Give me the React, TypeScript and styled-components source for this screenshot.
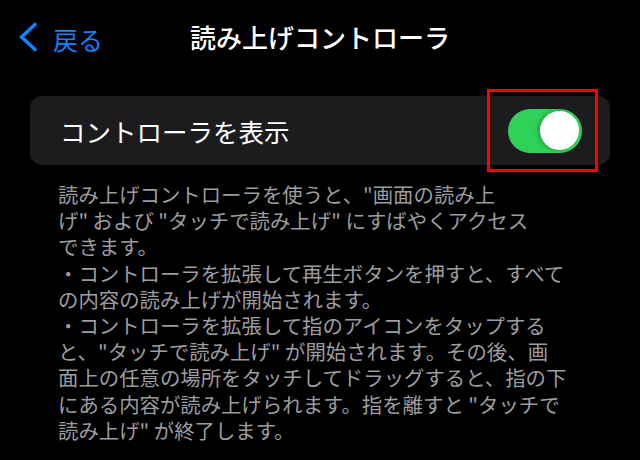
import styled, { createGlobalStyle } from 'styled-components';

const GlobalStyle = createGlobalStyle`
  html, body {
    margin: 0;
    padding: 0;
    background: #000000;
  }
  body {
    font-family: "Noto Sans CJK JP", "Noto Sans", sans-serif;
    -webkit-font-smoothing: antialiased;
  }
`;

const Screen = styled.div`
  width: 640px;
  height: 460px;
  overflow: hidden;
  background: #000000;
`;

const NavBar = styled.header`
  display: grid;
  grid-template-columns: 1fr auto 1fr;
  align-items: center;
  height: 74px;
`;

const BackButton = styled.button`
  display: flex;
  align-items: center;
  gap: 15px;
  justify-self: start;
  padding: 0 0 0 18px;
  background: none;
  border: none;
  color: #0a84ff;
  font-family: inherit;
  font-size: 25px;
  line-height: 1;
`;

const BackLabel = styled.span`
  margin-top: 4px;
`;

const Title = styled.h1`
  margin: 0;
  color: #ffffff;
  font-size: 26px;
  font-weight: 500;
  line-height: 1;
`;

const Card = styled.section`
  display: flex;
  align-items: center;
  justify-content: space-between;
  height: 69px;
  margin: 22px 30px 0;
  padding: 0 28px 0 30px;
  border-radius: 12px;
  background: #1c1c1e;
`;

const RowLabel = styled.span`
  color: #ffffff;
  font-size: 25.5px;
  line-height: 1;
`;

const ToggleWrap = styled.div`
  position: relative;
  display: flex;
`;

const Toggle = styled.div<{ $on: boolean }>`
  display: flex;
  justify-content: ${p => (p.$on ? 'flex-end' : 'flex-start')};
  align-items: center;
  box-sizing: border-box;
  width: 74px;
  height: 44px;
  padding: 0 3px;
  border-radius: 22px;
  background: ${p => (p.$on ? '#30d158' : '#39393d')};
`;

const Knob = styled.div`
  width: 39px;
  height: 39px;
  border-radius: 50%;
  background: #ffffff;
  box-shadow: -2px 0 4px rgba(0, 0, 0, 0.25);
`;

const Highlight = styled.div`
  position: absolute;
  top: -20px;
  bottom: -19px;
  left: -21px;
  right: -16px;
  border: 3px solid #ff0000;
  pointer-events: none;
`;

const Footer = styled.div`
  margin-top: 16px;
  padding: 0 20px 0 58px;
  color: #9c9ca1;
  font-size: 20.4px;
`;

const FooterLine = styled.div`
  height: 26.2px;
  line-height: 26.2px;
  white-space: nowrap;
`;

const lines = [
  '読み上げコントローラを使うと、"画面の読み上',
  'げ" および "タッチで読み上げ" にすばやくアクセス',
  'できます。',
  '・コントローラを拡張して再生ボタンを押すと、すべて',
  'の内容の読み上げが開始されます。',
  '・コントローラを拡張して指のアイコンをタップする',
  'と、"タッチで読み上げ" が開始されます。その後、画',
  '面上の任意の場所をタッチしてドラッグすると、指の下',
  'にある内容が読み上げられます。指を離すと "タッチで',
  '読み上げ" が終了します。',
];

function Chevron() {
  return (
    <svg width="20" height="30" viewBox="0 0 20 30" fill="none">
      <path
        d="M17 2.5 L3.5 15 L17 27.5"
        stroke="#0a84ff"
        strokeWidth="3.6"
        strokeLinecap="round"
        strokeLinejoin="round"
      />
    </svg>
  );
}

export default function App() {
  return (
    <Screen>
      <GlobalStyle />
      <NavBar>
        <BackButton type="button">
          <Chevron />
          <BackLabel>戻る</BackLabel>
        </BackButton>
        <Title>読み上げコントローラ</Title>
        <div />
      </NavBar>

      <Card>
        <RowLabel>コントローラを表示</RowLabel>
        <ToggleWrap>
          <Toggle $on>
            <Knob />
          </Toggle>
          <Highlight />
        </ToggleWrap>
      </Card>

      <Footer>
        {lines.map((line, i) => (
          <FooterLine key={i}>{line}</FooterLine>
        ))}
      </Footer>
    </Screen>
  );
}
